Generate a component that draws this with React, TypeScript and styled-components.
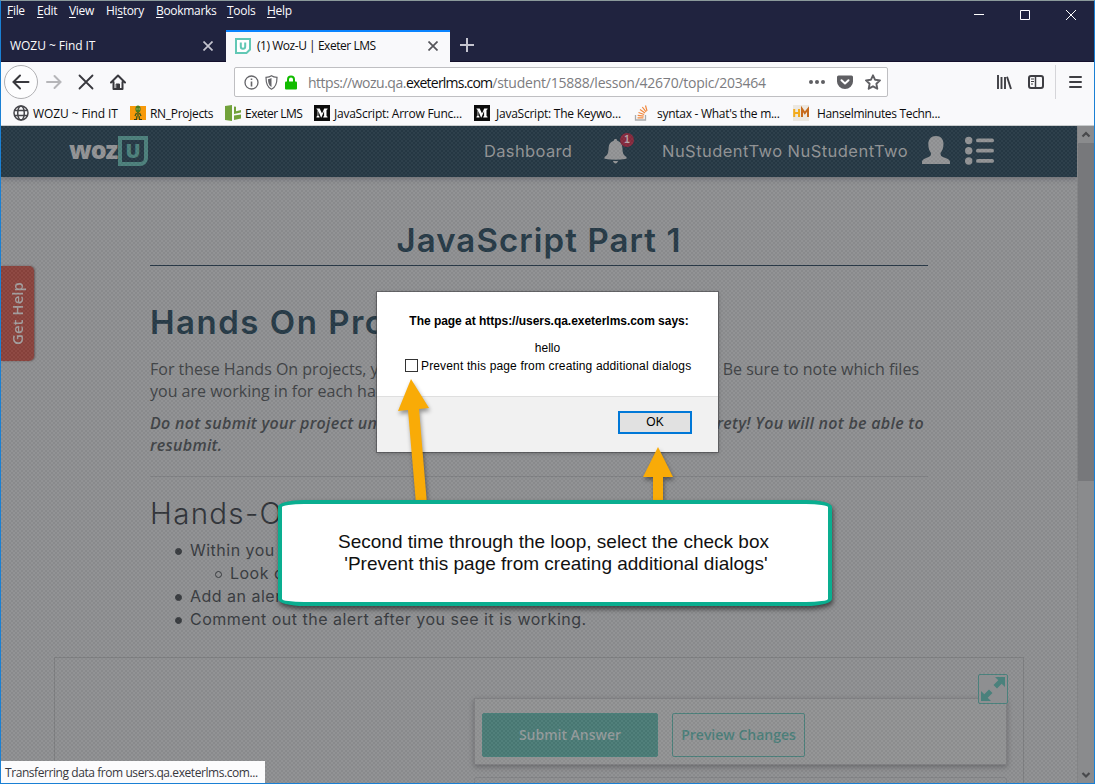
import React from "react";
import styled, { createGlobalStyle, css } from "styled-components";

const ui = `"Open Sans", "Noto Sans", sans-serif`;
const display = `Inter, "Open Sans", sans-serif`;
const arial = `"Liberation Sans", Arial, sans-serif`;

const GlobalStyle = createGlobalStyle`
  *, *::before { box-sizing: border-box; }
  body { margin: 0; overflow: hidden; }
`;

const Window = styled.div`
  position: relative;
  width: 1095px;
  height: 784px;
  display: flex;
  flex-direction: column;
  border: 1px solid #1a80d4;
  border-top-color: #8b9a9b;
  background: #f9f9fb;
  font-family: ${ui};
  font-size: 12px;
  color: #0c0c0d;
  overflow: hidden;
  white-space: nowrap;
`;

/* ---------- title bar ---------- */

const TitleBar = styled.div`
  height: 29px;
  flex: none;
  display: flex;
  align-items: flex-start;
  background: #20233f;
`;

const Menus = styled.nav`
  display: flex;
  padding-left: 6px;
  flex: 1;
`;

const Menu = styled.span<{ $w: number }>`
  width: ${(p) => p.$w}px;
  line-height: 20px;
  color: #fbfbfe;
  letter-spacing: -0.3px;
  u { text-underline-offset: 2px; }
`;

const WindowButtons = styled.div`
  display: flex;
  svg { width: 46px; height: 28px; }
`;

const TabStrip = styled.div`
  height: 32px;
  flex: none;
  display: flex;
  background: #20233f;
  border-bottom: 1px solid #14102c;
`;

const Tab = styled.div<{ $active?: boolean }>`
  width: 225px;
  display: flex;
  align-items: center;
  padding: 0 13px 0 9px;
  color: #fbfbfe;
  letter-spacing: -0.05px;
  svg { flex: none; }
  ${(p) =>
    p.$active &&
    css`
      width: 224px;
      height: 32px;
      padding-right: 12px;
      padding-bottom: 3px;
      background: #f9f9fb;
      color: #0c0c0d;
      border-top: 2px solid #0a84ff;
      letter-spacing: -0.46px;
    `}
`;

const TabLabel = styled.span`
  flex: 1;
`;

const TabIcon = styled.svg`
  width: 16px;
  height: 16px;
  margin-right: 6px;
`;

const NewTab = styled.svg`
  width: 16px;
  height: 16px;
  margin: 7px 0 0 9px;
`;

/* ---------- navigation ---------- */

const NavBar = styled.div`
  height: 40px;
  flex: none;
  display: flex;
  align-items: center;
  padding-left: 3px;
`;

const BackButton = styled.div`
  width: 34px;
  height: 34px;
  border: 1px solid #b0b0b3;
  border-radius: 50%;
  background: #fdfdfe;
  display: grid;
  place-items: center;
`;

const NavIcons = styled.div`
  width: 196px;
  display: flex;
  gap: 16px;
  padding-left: 8px;
`;

const UrlBar = styled.div`
  width: 654px;
  height: 30px;
  flex: none;
  display: flex;
  align-items: center;
  border: 1px solid #bfbfc2;
  border-radius: 2px;
  background: #fff;
  padding: 0 6px 0 9px;
`;

const UrlIcons = styled.div<{ $gap: number }>`
  display: flex;
  align-items: center;
  gap: ${(p) => p.$gap}px;
`;

const Url = styled.div`
  flex: 1;
  display: flex;
  padding-left: 10px;
  font-size: 14px;
  color: #7c7c80;
`;

const UrlPart = styled.span<{ $ls: number; $strong?: boolean }>`
  letter-spacing: ${(p) => p.$ls}px;
  color: ${(p) => (p.$strong ? "#0c0c0d" : "inherit")};
`;

const ToolIcons = styled.div`
  flex: 1;
  display: flex;
  align-items: center;
  padding-left: 108px;
`;

const LibraryIcon = styled.svg`
  width: 16px;
  height: 16px;
  margin-right: 16px;
`;

const Separator = styled.i`
  width: 1px;
  height: 34px;
  background: #d5d5d9;
  margin: 0 13px 0 11px;
`;

const Bookmarks = styled.div`
  height: 24px;
  flex: none;
  display: flex;
  align-items: center;
  padding-left: 12px;
  border-bottom: 1px solid #c9cccd;
`;

const Bookmark = styled.div<{ $w: number; $gap: number; $ls: number }>`
  width: ${(p) => p.$w}px;
  display: flex;
  align-items: center;
  gap: ${(p) => p.$gap}px;
  letter-spacing: ${(p) => p.$ls}px;
  padding-bottom: 1px;
  svg { width: 16px; height: 16px; flex: none; }
`;

/* ---------- page ---------- */

const Viewport = styled.div`
  flex: 1;
  min-height: 0;
  display: flex;
  background: #8e8f90;
`;

const Page = styled.div`
  position: relative;
  width: 1076px;
  height: 100%;
  overflow: hidden;
  background: #8e8f91;
`;

const Dim = styled.div`
  position: absolute;
  inset: 0;
  background: repeating-conic-gradient(rgba(255, 255, 255, 0.035) 0 25%, rgba(0, 0, 0, 0.035) 0 50%) 0 0 / 4px 4px;
`;

const Header = styled.header`
  height: 51px;
  display: flex;
  align-items: center;
  padding: 0 0 1px 68px;
  background: #263945;
  box-shadow: 0 1px 6px rgba(40, 40, 60, 0.4);
  font: 400 16.5px ${display};
  color: #929395;
`;

const Logo = styled.div`
  width: 415px;
  display: flex;
  align-items: center;
  font: 800 25px/30px ${ui};
  letter-spacing: -1.1px;
`;

const LogoWord = styled.span`
  width: 49px;
  height: 34px;
`;

const LogoBox = styled.span`
  width: 30px;
  height: 30px;
  border: 4px solid #4c807b;
  border-radius: 0 0 8px 0;
  color: #4c807b;
  font: 800 20px/22px ${ui};
  letter-spacing: 0;
  text-align: center;
`;

const HeaderLink = styled.span<{ $w: number; $ls: number }>`
  width: ${(p) => p.$w}px;
  letter-spacing: ${(p) => p.$ls}px;
`;

const Bell = styled.div`
  position: relative;
  width: 58px;
  height: 24px;
`;

const Badge = styled.span`
  position: absolute;
  left: 16px;
  top: -6px;
  width: 14px;
  height: 14px;
  border-radius: 50%;
  background: #86293d;
  color: #b4a4a8;
  font: 700 10px/14px ${arial};
  text-align: center;
`;

const Article = styled.main`
  width: 778px;
  margin-left: 149px;
  color: #404346;
  font-size: 16px;
  line-height: 22px;
`;

const Title = styled.h1`
  height: 89px;
  margin: 0;
  padding-top: 43px;
  border-bottom: 1px solid #263745;
  font: 600 33px/41px ${display};
  letter-spacing: 1.1px;
  text-align: center;
  color: #263a47;
`;

const Heading = styled.h2`
  margin: 36px 0 15px;
  font: 600 33px/41px ${display};
  letter-spacing: 1.5px;
  color: #263a47;
`;

const SubHeading = styled.h3`
  margin: 15px 0 5px;
  font: 300 29.5px/42px ${display};
  letter-spacing: 1.3px;
  color: #303338;
`;

const Line = styled.div<{ $end?: number }>`
  display: flex;
  justify-content: space-between;
  padding-right: ${(p) => p.$end ?? 0}px;
`;

const Warning = styled.div`
  margin-top: 10px;
  padding-bottom: 20px;
  border-bottom: 1px solid #808184;
  font-style: italic;
  font-weight: 600;
  letter-spacing: 0.28px;
`;

const List = styled.ul`
  margin: 0;
  padding-left: 40px;
  list-style: none;
  font: 400 16px/23px ${display};
  letter-spacing: 0.49px;
  color: #383b3f;
`;

const Item = styled.li<{ $hollow?: boolean }>`
  display: flex;
  align-items: center;
  &::before {
    content: "";
    width: 7px;
    height: 7px;
    margin: 1px 8px 0 -15px;
    border: 1px solid #383b3f;
    border-radius: 50%;
    background: ${(p) => (p.$hollow ? "transparent" : "#383b3f")};
  }
`;

const Workspace = styled.section`
  width: 970px;
  height: 160px;
  margin: 26px 0 0 53px;
  padding: 16px 15px 0 0;
  border: 1px solid #7d7e81;
  display: flex;
  flex-direction: column;
  align-items: flex-end;
`;

const ExpandButton = styled.div`
  position: relative;
  z-index: 1;
  width: 30px;
  height: 30px;
  border: 1px solid #4a817c;
  border-radius: 2px;
  display: grid;
  place-items: center;
  background: #8e8f91;
`;

const Panel = styled.div`
  width: 533px;
  height: 67px;
  margin: -6px 1px 12px 0;
  padding: 14px 7px;
  display: flex;
  gap: 14px;
  background: #919293;
  border: 1px solid #7f8083;
  box-shadow: 0 2px 5px rgba(50, 50, 55, 0.4);
`;

const NextPanel = styled.div`
  width: 533px;
  height: 20px;
  margin-right: 1px;
  border: 1px solid #828386;
  border-radius: 3px;
`;

const ActionButton = styled.button<{ $filled?: boolean }>`
  width: ${(p) => (p.$filled ? 176 : 133)}px;
  height: 44px;
  padding: 0 0 2px;
  border: 1px solid #4b7f7a;
  border-radius: 2px;
  background: ${(p) => (p.$filled ? "#4b7b76" : "transparent")};
  color: ${(p) => (p.$filled ? "#939a9b" : "#4b7f7a")};
  font: 600 14px ${ui};
`;

const HelpTab = styled.div`
  position: absolute;
  left: 0;
  top: 140px;
  width: 33px;
  height: 95px;
  border-radius: 5px 0 0 5px;
  background: #8b433d;
  box-shadow: -1px 0 2px #66595a;
  color: #a39e9e;
  font: 600 15px/32px ${ui};
  writing-mode: vertical-rl;
  transform: rotate(180deg);
  text-align: center;
`;

const Scrollbar = styled.div`
  flex: 1;
  display: flex;
  flex-direction: column;
  align-items: stretch;
  background: #8a8b8d;
  border-left: 1px solid #838486;
  svg { width: 16px; height: 17px; flex: none; }
`;

const Thumb = styled.div`
  height: 338px;
  background: #77787b;
  margin-bottom: auto;
`;

/* ---------- overlays ---------- */

const StatusTip = styled.div`
  position: absolute;
  left: 0;
  bottom: 0;
  width: 264px;
  height: 22px;
  padding-left: 4px;
  background: #fbfbfc;
  color: #38383d;
  line-height: 23px;
  letter-spacing: -0.43px;
`;

const Dialog = styled.div`
  position: absolute;
  left: 376px;
  top: 291px;
  width: 341px;
  height: 160px;
  background: #fff;
  box-shadow: 0 0 0 1px rgba(70, 70, 72, 0.55), 0 1px 4px rgba(0, 0, 0, 0.3);
  font: 12px/18px ${arial};
  color: #000;
  text-align: center;
  display: flex;
  flex-direction: column;
`;

const DialogTitle = styled.div`
  padding: 20px 0 9px 3px;
  font-weight: 700;
  letter-spacing: -0.03px;
`;

const CheckRow = styled.label`
  display: flex;
  align-items: center;
  gap: 3px;
  padding-left: 28px;
  letter-spacing: 0.15px;
`;

const CheckBox = styled.i`
  width: 13px;
  height: 13px;
  margin-bottom: 1px;
  border: 1px solid #333;
`;

const DialogFooter = styled.div`
  margin-top: auto;
  height: 56px;
  padding: 14px 26px 0 0;
  display: flex;
  justify-content: flex-end;
  background: #f1f1f1;
  border-top: 1px solid #dfdfdf;
`;

const OkButton = styled.button`
  width: 74px;
  height: 23px;
  padding: 0 0 2px;
  border: 2px solid #0078d7;
  background: #e1e1e1;
  font: 12px ${arial};
  color: #000;
`;

const Arrows = styled.svg`
  position: absolute;
  left: 389px;
  top: 369px;
  width: 300px;
  height: 140px;
  filter: drop-shadow(1px 3px 2px rgba(0, 0, 0, 0.4));
`;

const Callout = styled.div`
  position: absolute;
  left: 277px;
  top: 499px;
  width: 554px;
  height: 106px;
  padding-top: 27px;
  border: 4px solid #0aae90;
  border-radius: 26px / 7px;
  background: #fff;
  box-shadow: 1px 3px 5px rgba(0, 0, 0, 0.55);
  font: 19px/22px ${arial};
  color: #111;
  text-align: center;
`;

const CalloutLine = styled.div<{ $shift: number }>`
  padding-left: ${(p) => Math.max(p.$shift, 0)}px;
  padding-right: ${(p) => Math.max(-p.$shift, 0)}px;
`;

function Cross({ color }: { color: string }) {
  return (
    <svg width="10" height="10" viewBox="0 0 10 10" stroke={color} strokeWidth="1.7">
      <path d="M.5.5l9 9M9.5.5l-9 9" />
    </svg>
  );
}

function UFavicon() {
  return (
    <TabIcon viewBox="0 0 16 16" fill="none">
      <path d="M1 1h14v10.5L11.5 15H1z" fill="#fff" stroke="#62c8b5" strokeWidth="2" />
      <path d="M5.8 4.5v4a2.2 2.2 0 0 0 4.4 0v-4" stroke="#62c8b5" strokeWidth="2" />
    </TabIcon>
  );
}

function MediumIcon() {
  return (
    <svg viewBox="0 0 16 16">
      <rect width="16" height="16" fill="#0b0b0b" />
      <path d="M2.5 3.5h3.2L8 8.6l2.2-5.1h3.3v.8l-1 .7v6l1 .7v.8H9.2v-.8l.9-.7V5.9L7.4 12.500H7L4.300 6v4.500l1.200 1.200v.8h-3v-.8l1.100-1.200V5l-1.100-.9z" fill="#fff" />
    </svg>
  );
}

const menus: [string, string, string, number][] = [
  ["", "F", "ile", 30],
  ["", "E", "dit", 32],
  ["", "V", "iew", 37],
  ["Hi", "s", "tory", 50],
  ["", "B", "ookmarks", 71],
  ["", "T", "ools", 40],
  ["", "H", "elp", 40],
];

function Chrome() {
  return (
    <>
      <TitleBar>
        <Menus>
          {menus.map(([a, key, b, w]) => (
            <Menu key={key + b} $w={w}>{a}<u>{key}</u>{b}</Menu>
          ))}
        </Menus>
        <WindowButtons>
          <svg viewBox="0 0 46 28" stroke="#fff" fill="none"><path d="M18 13.500h10" /></svg>
          <svg viewBox="0 0 46 28" stroke="#fff" fill="none"><path d="M18.500 9.500h9v9h-9z" /></svg>
          <svg viewBox="0 0 46 28" stroke="#fff" fill="none"><path d="M18 9l10 10M28 9L18 19" /></svg>
        </WindowButtons>
      </TitleBar>
      <TabStrip>
        <Tab>
          <TabLabel>WOZU ~ Find IT</TabLabel>
          <Cross color="#c4c4cf" />
        </Tab>
        <Tab $active>
          <UFavicon />
          <TabLabel>(1) Woz-U | Exeter LMS</TabLabel>
          <Cross color="#55555a" />
        </Tab>
        <NewTab viewBox="0 0 16 16" stroke="#c4c4cf" strokeWidth="2"><path d="M8 1v14M1 8h14" /></NewTab>
      </TabStrip>
      <NavBar>
        <BackButton>
          <svg width="18" height="16" viewBox="0 0 18 16" fill="none" stroke="#38383d" strokeWidth="2" strokeLinecap="round"><path d="M16.500 8h-15M8 1.500L1.500 8 8 14.500" /></svg>
        </BackButton>
        <NavIcons>
          <svg width="16" height="16" viewBox="0 0 16 16" fill="none" stroke="#b6b6b9" strokeWidth="2" strokeLinecap="round"><path d="M1 8h13.500M8.500 2l6 6-6 6" /></svg>
          <svg width="16" height="16" viewBox="0 0 16 16" fill="none" stroke="#38383d" strokeWidth="1.800" strokeLinecap="round"><path d="M1.500 1.500l13 13M14.500 1.500l-13 13" /></svg>
          <svg width="16" height="16" viewBox="0 0 16 16" fill="none" stroke="#38383d" strokeWidth="2" strokeLinejoin="round" strokeLinecap="round"><path d="M1 8.500L8 1.500l7 7M3.500 8v7h9V8" /><path d="M6.500 10h3v5h-3z" strokeWidth="1" fill="#38383d" /></svg>
        </NavIcons>
        <UrlBar>
          <UrlIcons $gap={6}>
            <svg width="15" height="15" viewBox="0 0 15 15" fill="none" stroke="#66666a" strokeWidth="1.300"><circle cx="7.500" cy="7.500" r="6.500" /><path d="M7.500 6.500v5M7.500 3.500v1.600" strokeWidth="1.600" /></svg>
            <svg width="13" height="15" viewBox="0 0 13 15"><path d="M6.500.8C4.800 2 3 2.300 1 2.400c0 5 .5 9.500 5.500 11.800 5-2.300 5.500-6.800 5.500-11.800C10 2.300 8.200 2 6.500.8z" fill="#fff" stroke="#66666a" strokeWidth="1.200" /><path d="M6.500 3v9C3.700 10.500 3.100 7.500 3 4.200 4.300 4 5.500 3.600 6.500 3z" fill="#66666a" /></svg>
            <svg width="14" height="15" viewBox="0 0 14 15"><path d="M4 7V4.500a3 3 0 0 1 6 0V7" fill="none" stroke="#12bc00" strokeWidth="2" /><rect x="1" y="6.500" width="12" height="8" rx="1" fill="#12bc00" /></svg>
          </UrlIcons>
          <Url>
            <UrlPart $ls={-0.5}>https://wozu.qa.</UrlPart>
            <UrlPart $ls={-0.78} $strong>exeterlms.com</UrlPart>
            <UrlPart $ls={-0.24}>/student/15888/lesson/42670/topic/203464</UrlPart>
          </Url>
          <UrlIcons $gap={12}>
            <svg width="16" height="16" viewBox="0 0 16 16" fill="#5f5f63"><circle cx="2" cy="8" r="2" /><circle cx="8" cy="8" r="2" /><circle cx="14" cy="8" r="2" /></svg>
            <svg width="16" height="16" viewBox="0 0 16 16"><path d="M1.500 1.500h13a1.500 1.500 0 0 1 1.500 1.500v4.500a8 7.500 0 0 1-16 0V3a1.500 1.500 0 0 1 1.500-1.500z" fill="#5f5f63" /><path d="M4.500 6.200L8 9.500l3.500-3.300" fill="none" stroke="#fff" strokeWidth="2" strokeLinecap="round" strokeLinejoin="round" /></svg>
            <svg width="16" height="16" viewBox="0 0 16 16"><path d="M8 1.300l2.100 4.500 4.900.6-3.600 3.400.9 4.900L8 12.300l-4.300 2.400.9-4.900L1 6.400l4.900-.6z" fill="none" stroke="#5f5f63" strokeWidth="1.900" strokeLinejoin="round" /></svg>
          </UrlIcons>
        </UrlBar>
        <ToolIcons>
          <LibraryIcon viewBox="0 0 16 16" stroke="#3e3e43" strokeWidth="1.900"><path d="M2 1v14M5.500 3v12M9 3v12M11 2.800L15 15" /></LibraryIcon>
          <svg width="16" height="16" viewBox="0 0 16 16" fill="none" stroke="#3e3e43"><rect x="1" y="2" width="14" height="12" rx="2" strokeWidth="2" /><path d="M7.500 2v12" strokeWidth="1.500" /><path d="M3 5h3M3 7.500h3M3 10h2" /></svg>
          <Separator />
          <svg width="13" height="14" viewBox="0 0 13 14" stroke="#3e3e43" strokeWidth="2" strokeLinecap="round"><path d="M1 2h11M1 7h11M1 12h11" /></svg>
        </ToolIcons>
      </NavBar>
      <Bookmarks>
        <Bookmark $w={117} $gap={4} $ls={-0.1}>
          <svg viewBox="0 0 16 16" fill="none" stroke="#45454a" strokeWidth="1.500"><circle cx="8" cy="8" r="7" /><ellipse cx="8" cy="8" rx="3.300" ry="7" /><path d="M1 5.500h14M1 10.500h14" /></svg>
          WOZU ~ Find IT
        </Bookmark>
        <Bookmark $w={95} $gap={4} $ls={-0.3}>
          <svg viewBox="0 0 16 16"><rect y="1" width="16" height="14" fill="#f79a0b" /><ellipse cx="8" cy="4" rx="2.600" ry="3.500" fill="#4a7d22" /><path d="M8 7v4M6.500 8L5 11M9.500 8l1.500 3M7 11l-.5 3M9 11l.5 3" stroke="#3d5a1c" strokeWidth="1.400" fill="none" /><path d="M4 14.500h3M9 14.500h3" stroke="#3a3a14" /><path d="M6.500 4h1M8.700 4h1" stroke="#d8e8a0" /></svg>
          RN_Projects
        </Bookmark>
        <Bookmark $w={89} $gap={4} $ls={-0.5}>
          <svg viewBox="0 0 16 16" fill="#72a23b"><path d="M0 1l7-1v16l-7-1zM9 1.500l2 .3v4.500l5-1.300v2.500L9 9zM9 10.500l7-1v4L9 15z" /></svg>
          Exeter LMS
        </Bookmark>
        <Bookmark $w={160} $gap={4} $ls={-0.24}><MediumIcon />JavaScript: Arrow Func...</Bookmark>
        <Bookmark $w={160} $gap={6} $ls={-0.24}><MediumIcon />JavaScript: The Keywo...</Bookmark>
        <Bookmark $w={159} $gap={7} $ls={-0.28}>
          <svg viewBox="0 0 16 16" fill="none"><path d="M1.500 10v5h10v-5" stroke="#a9abad" strokeWidth="1.300" /><path d="M3.500 12.800h6M3.700 10.300l6 .9M4.500 7.500l5.700 2M6 4.600l5 3.500M8.300 2l3.800 4.800M11.500.5l1.500 5.500" stroke="#f0883e" strokeWidth="1.200" /></svg>
          syntax - What's the m...
        </Bookmark>
        <Bookmark $w={160} $gap={8} $ls={-0.33}>
          <svg viewBox="0 0 16 16" fill="none" strokeWidth="2"><rect width="16" height="16" fill="#ece8e1" /><path d="M1.200 4v8M6 4v8M1 8h5" stroke="#f2ab1d" /><path d="M9 12V4l2.800 4L15 4v8" stroke="#c66a1c" /></svg>
          Hanselminutes Techn...
        </Bookmark>
      </Bookmarks>
    </>
  );
}

function PageHeader() {
  return (
    <Header>
      <Logo>
        <LogoWord>woz</LogoWord>
        <LogoBox>U</LogoBox>
      </Logo>
      <HeaderLink $w={120} $ls={0.35}>Dashboard</HeaderLink>
      <Bell>
        <svg width="23" height="25" viewBox="0 0 23 25" fill="#929395"><path d="M11.500 0c1 0 1.700.7 1.700 1.700 3.400.8 5 3.500 5.200 7 .2 5.300 1 7.300 4.100 9.300v1.800c-7 1.300-15 1.300-22 0V18c3.100-2 3.900-4 4.100-9.300.2-3.500 1.800-6.200 5.200-7 0-1 .7-1.700 1.700-1.700zM9 22h5c-.4 1.600-1.300 2.400-2.500 2.400S9.400 23.600 9 22z" /></svg>
        <Badge>1</Badge>
      </Bell>
      <HeaderLink $w={259} $ls={0.46}>NuStudentTwo NuStudentTwo</HeaderLink>
      <svg width="44" height="30" viewBox="0 0 44 30" fill="#929395"><path d="M15 0c5 0 7.500 3.300 7.500 8 0 4-1.300 7-3 9 0 2.500.5 3.300 3 4.300 4 1.500 6.500 2.500 6.500 4.700v2H1v-2c0-2.200 2.500-3.200 6-4.700 2.500-1 3-1.800 3-4.300-1.700-2-2.700-5-2.700-9C7.300 3.300 10 0 15 0z" /></svg>
      <svg width="30" height="30" viewBox="0 0 30 30" fill="#929395"><circle cx="3.700" cy="4.500" r="3.700" /><circle cx="3.700" cy="14.800" r="3.700" /><circle cx="3.700" cy="25" r="3.700" /><rect x="11" y="2.500" width="18" height="3.800" rx="1.900" /><rect x="11" y="12.800" width="18" height="3.800" rx="1.900" /><rect x="11" y="23" width="18" height="3.800" rx="1.900" /></svg>
    </Header>
  );
}

export default function App() {
  return (
    <Window>
      <GlobalStyle />
      <Chrome />
      <Viewport>
        <Page>
          <PageHeader />
          <Article>
            <Title>JavaScript Part 1</Title>
            <Heading>Hands On Pro</Heading>
            <Line $end={9}>
              <span>For these Hands On projects, y</span>
              <span>Be sure to note which files</span>
            </Line>
            <Line><span>you are working in for each ha</span></Line>
            <Warning>
              <Line $end={4}>
                <span>Do not submit your project un</span>
                <span>rety! You will not be able to</span>
              </Line>
              <Line><span>resubmit.</span></Line>
            </Warning>
            <SubHeading>Hands-O</SubHeading>
            <List>
              <Item>Within you</Item>
              <List as="ul"><Item $hollow>Look o</Item></List>
              <Item>Add an aler</Item>
              <Item>Comment out the alert after you see it is working.</Item>
            </List>
          </Article>
          <Workspace>
            <ExpandButton>
              <svg width="24" height="24" viewBox="0 0 24 24" fill="#4a817c"><path d="M14 0h10v10l-3.300-3.300-4.700 4.800-3.500-3.500L17.300 3.300zM0 14l3.300 3.300L8 12.500l3.500 3.500-4.800 4.700L10 24H0z" /></svg>
            </ExpandButton>
            <Panel>
              <ActionButton $filled>Submit Answer</ActionButton>
              <ActionButton>Preview Changes</ActionButton>
            </Panel>
            <NextPanel />
          </Workspace>
          <HelpTab>Get Help</HelpTab>
          <Dim />
        </Page>
        <Scrollbar>
          <svg viewBox="0 0 16 17" fill="none" stroke="#48494c" strokeWidth="2.200"><path d="M4.500 10.500L8 7l3.500 3.500" /></svg>
          <Thumb />
          <svg viewBox="0 0 16 17" fill="none" stroke="#48494c" strokeWidth="2.200"><path d="M4.500 7L8 10.500 11.500 7" /></svg>
        </Scrollbar>
      </Viewport>
      <StatusTip>Transferring data from users.qa.exeterlms.com...</StatusTip>
      <Dialog>
        <DialogTitle>The page at https://users.qa.exeterlms.com says:</DialogTitle>
        <div>hello</div>
        <CheckRow><CheckBox />Prevent this page from creating additional dialogs</CheckRow>
        <DialogFooter><OkButton>OK</OkButton></DialogFooter>
      </Dialog>
      <Arrows viewBox="0 0 300 140" fill="#f9ab07">
        <path d="M21 9l18 29-10 1 8 95H26L18 40 8 41z" />
        <path d="M268 77l15 30h-10v27h-10v-27h-10z" />
      </Arrows>
      <Callout>
        <CalloutLine $shift={-3}>Second time through the loop, select the check box</CalloutLine>
        <CalloutLine $shift={2}>'Prevent this page from creating additional dialogs'</CalloutLine>
      </Callout>
    </Window>
  );
}
